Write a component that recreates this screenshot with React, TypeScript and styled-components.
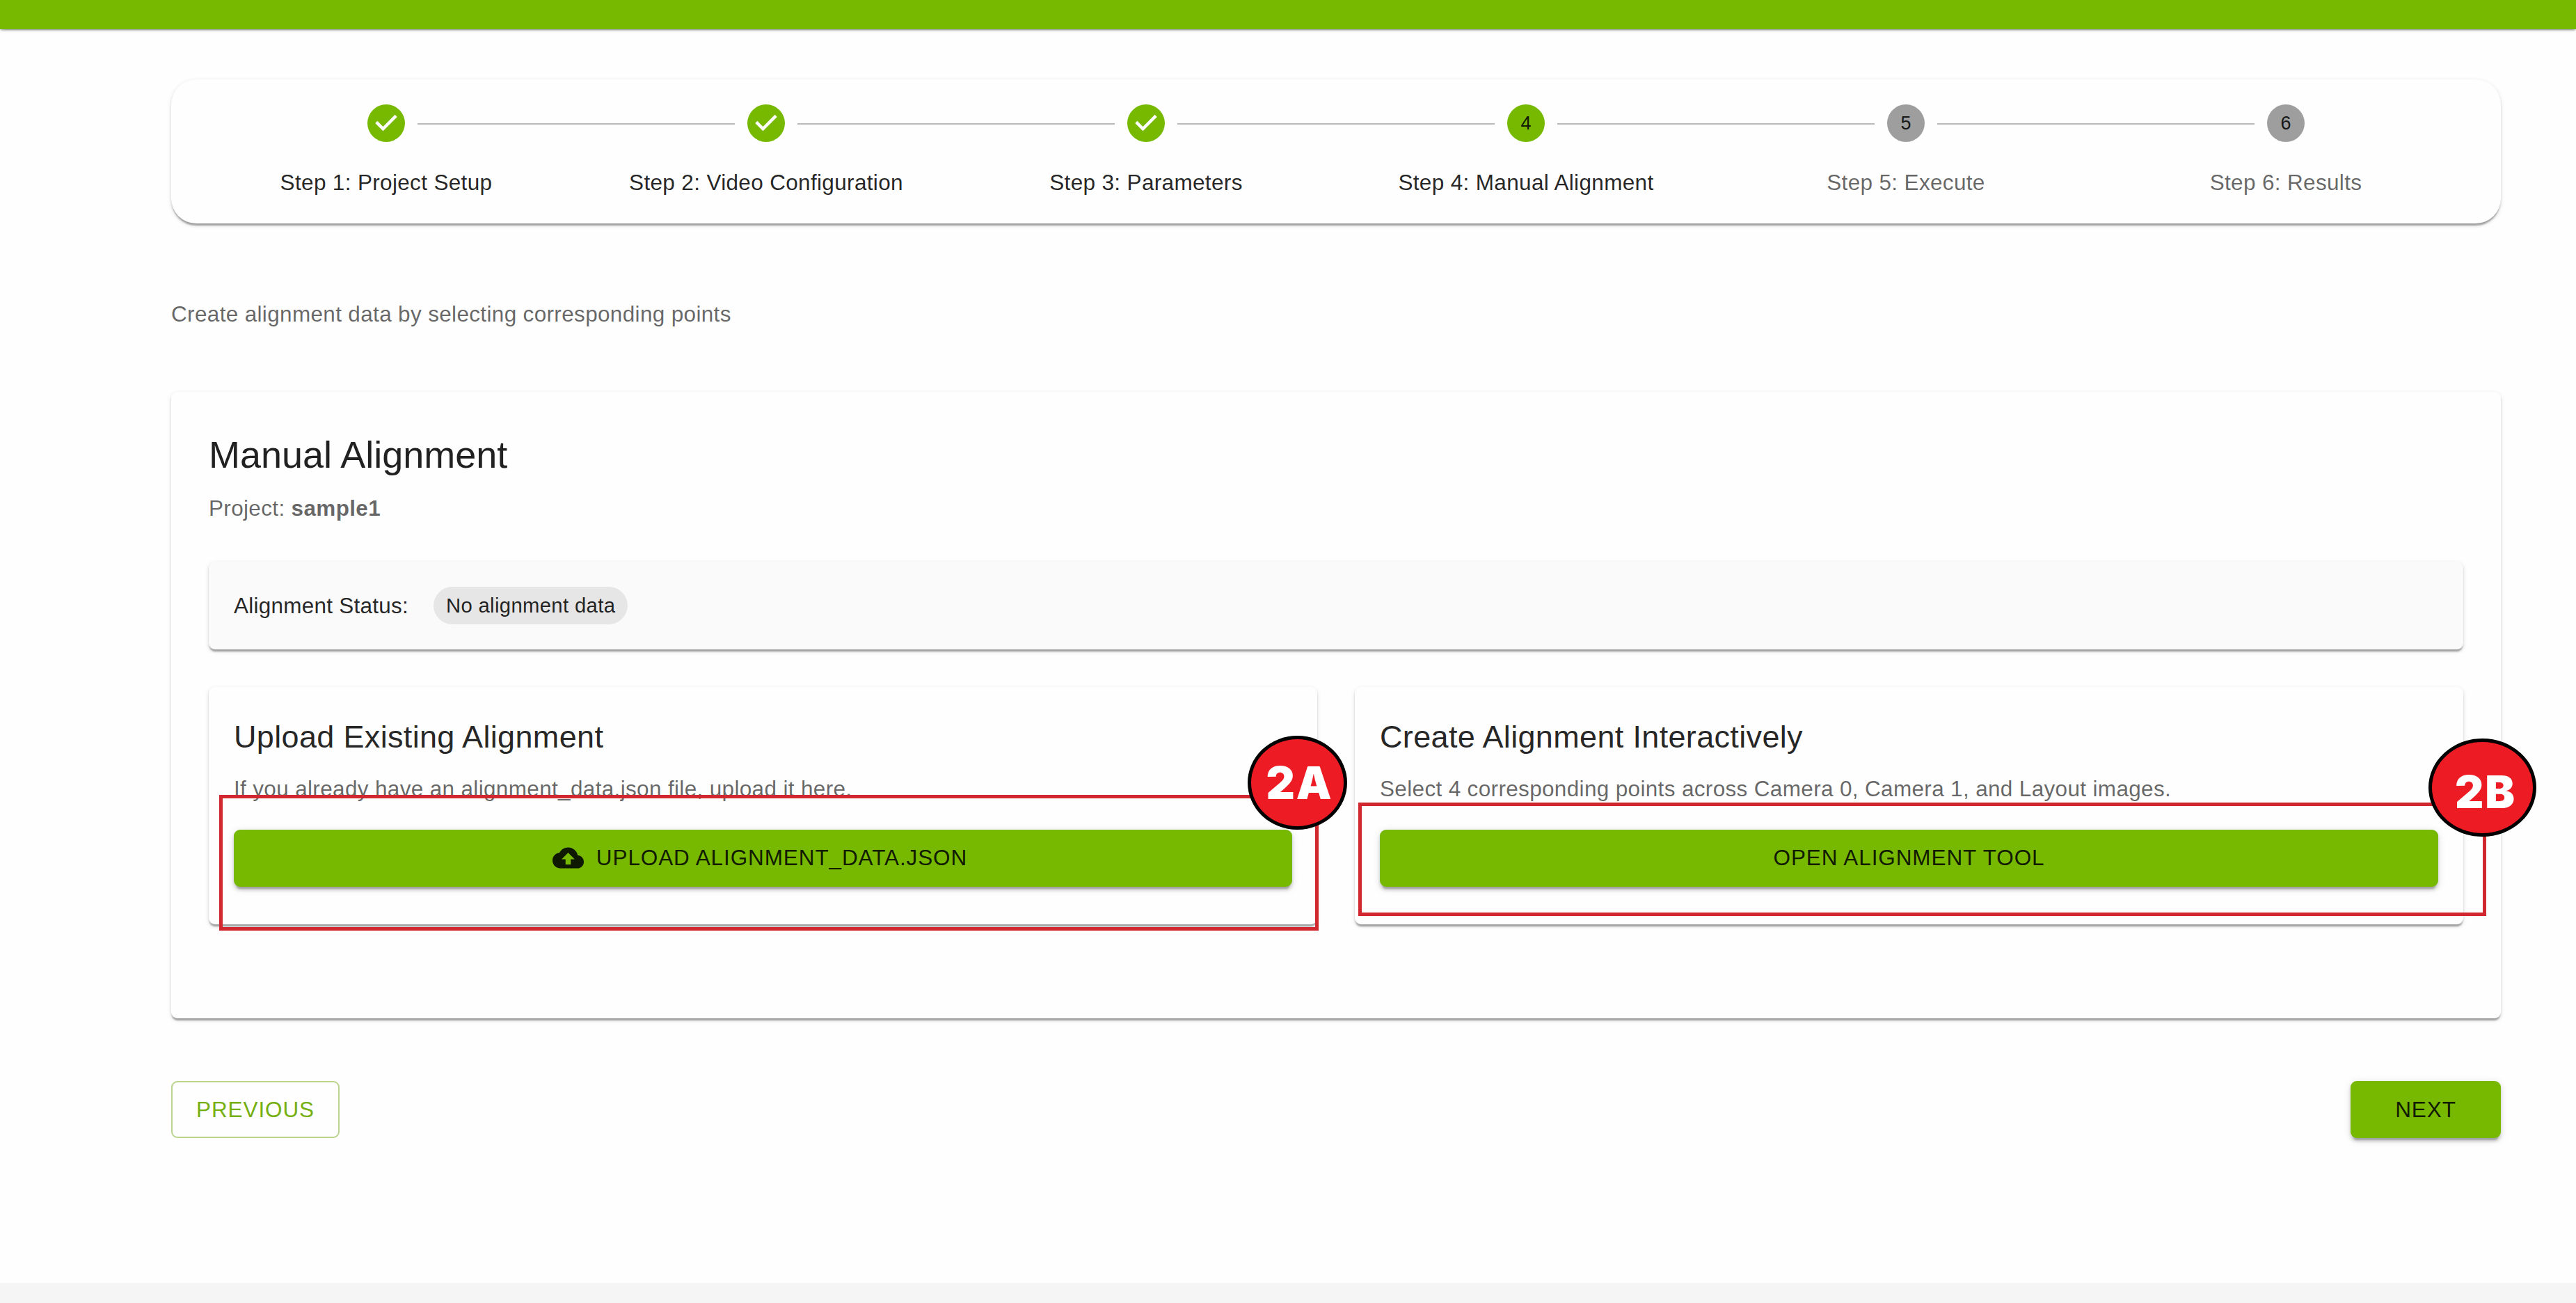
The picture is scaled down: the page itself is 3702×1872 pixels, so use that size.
import React from 'react';
import styled, { createGlobalStyle, css } from 'styled-components';

const green = '#76b900';
const surface = '#fefefe';
const textPrimary = 'rgba(0, 0, 0, 0.87)';
const textSecondary = 'rgba(0, 0, 0, 0.6)';

const raised1 = css`
  box-shadow:
    0 4.5px 2.25px -2.25px rgba(0, 0, 0, 0.2),
    0 2.25px 2.25px 0 rgba(0, 0, 0, 0.14),
    0 2.25px 6.75px 0 rgba(0, 0, 0, 0.12);
`;

const raised2 = css`
  box-shadow:
    0 6.75px 2.25px -4.5px rgba(0, 0, 0, 0.2),
    0 4.5px 4.5px 0 rgba(0, 0, 0, 0.14),
    0 2.25px 11.25px 0 rgba(0, 0, 0, 0.12);
`;

const body2 = css`
  font-size: 31.5px;
  line-height: 45px;
  letter-spacing: 0.01071em;
`;

const GlobalStyle = createGlobalStyle`
  *, *::before, *::after { box-sizing: border-box; }
  body {
    margin: 0;
    background: #f5f5f5;
    color: ${textPrimary};
    font-family: "Liberation Sans", Arial, Helvetica, sans-serif;
  }
  h1, h2, p { margin: 0; font-weight: 400; }
`;

const Page = styled.div`
  position: relative;
  display: flex;
  flex-direction: column;
  height: 1872px;
  overflow: hidden;
`;

const AppBar = styled.header`
  flex: none;
  height: 42px;
  background: ${green};
  z-index: 1;
  ${raised1}
`;

const Main = styled.main`
  flex: none;
  height: 1801px;
  padding: 72px 108px 0 246px;
  background: ${surface};
`;

const Stepper = styled.ol`
  display: grid;
  grid-template-columns: repeat(6, 1fr);
  margin: 0;
  padding: 36px;
  list-style: none;
  border-radius: 36px;
  background: ${surface};
  ${raised1}
`;

const StepItem = styled.li`
  display: flex;
  flex-direction: column;
  gap: 36px;
`;

const StepTrack = styled.div`
  display: flex;
  gap: 18px;
  height: 54px;
`;

const Connector = styled.span<{ $hidden: boolean }>`
  flex: 1;
  height: 2px;
  margin-top: 27px;
  background: ${(p) => (p.$hidden ? 'transparent' : '#bababa')};
`;

const StepBubble = styled.span<{ $active: boolean }>`
  display: flex;
  align-items: center;
  justify-content: center;
  width: 54px;
  height: 54px;
  border-radius: 50%;
  background: ${(p) => (p.$active ? green : '#9e9e9e')};
  font-size: 27px;
  line-height: 54px;
`;

const StepCheck = styled.svg`
  width: 54px;
  height: 54px;
  fill: ${green};
`;

const StepLabel = styled.span<{ $reached: boolean }>`
  ${body2}
  text-align: center;
  color: ${(p) => (p.$reached ? textPrimary : textSecondary)};
`;

const Description = styled.p`
  ${body2}
  margin-top: 108px;
  color: ${textSecondary};
`;

const Panel = styled.section`
  height: 900px;
  margin-top: 89px;
  padding: 54px;
  border-radius: 9px;
  background: ${surface};
  ${raised1}
`;

const PanelTitle = styled.h1`
  font-size: 54px;
  line-height: 72px;
  margin-bottom: 19px;
`;

const SecondaryText = styled.p`
  ${body2}
  color: ${textSecondary};
`;

const StatusBar = styled.div`
  display: flex;
  align-items: center;
  gap: 36px;
  height: 126px;
  margin: 54px 0;
  padding: 0 36px;
  border-radius: 9px;
  background: #fafafa;
  ${raised1}
`;

const StatusLabel = styled.span`
  ${body2}
  letter-spacing: 0.0075em;
`;

const Chip = styled.span`
  height: 54px;
  padding: 0 18px;
  border-radius: 36px;
  background: rgba(0, 0, 0, 0.08);
  font-size: 29.25px;
  line-height: 54px;
  letter-spacing: 0.012em;
`;

const Options = styled.div`
  display: grid;
  grid-template-columns: 1fr 1fr;
  gap: 54px;
`;

const Option = styled.article`
  display: flex;
  flex-direction: column;
  padding: 36px 36px 54px;
  border-radius: 9px;
  background: ${surface};
  ${raised1}
`;

const OptionTitle = styled.h2`
  font-size: 45px;
  line-height: 72px;
  letter-spacing: 0.0075em;
  margin-bottom: 15.75px;
`;

const Button = styled.button<{ $outlined?: boolean }>`
  display: flex;
  align-items: center;
  justify-content: center;
  gap: 18px;
  min-width: 216px;
  height: 82px;
  padding: 0 34px;
  border: ${(p) => (p.$outlined ? '2px solid rgba(118, 170, 30, 0.5)' : '0')};
  border-radius: 9px;
  background: ${(p) => (p.$outlined ? 'transparent' : green)};
  color: ${(p) => (p.$outlined ? '#76b010' : textPrimary)};
  font-family: inherit;
  font-size: 31.5px;
  line-height: 55px;
  letter-spacing: 0.02857em;
  text-transform: uppercase;
  ${(p) => !p.$outlined && raised2}
`;

const OptionButton = styled(Button)`
  margin-top: 36px;
`;

const CloudIcon = styled.svg`
  width: 45px;
  height: 45px;
  margin-left: -9px;
  fill: currentColor;
`;

const Navigation = styled.nav`
  display: flex;
  justify-content: space-between;
  margin-top: 90px;
`;

/* Annotations drawn over the page */
interface Area {
  $x: number;
  $y: number;
  $w: number;
  $h: number;
}

const Highlight = styled.div<Area>`
  position: absolute;
  z-index: 2;
  left: ${(p) => p.$x}px;
  top: ${(p) => p.$y}px;
  width: ${(p) => p.$w}px;
  height: ${(p) => p.$h}px;
  border: 5px solid #d0282e;
  pointer-events: none;
`;

const Marker = styled.div<Area & { $shiftX: number; $shiftY: number }>`
  position: absolute;
  z-index: 3;
  left: ${(p) => p.$x}px;
  top: ${(p) => p.$y}px;
  width: ${(p) => p.$w}px;
  height: ${(p) => p.$h}px;
  display: flex;
  align-items: center;
  justify-content: center;
  padding: ${(p) => p.$shiftY}px 0 0 ${(p) => p.$shiftX}px;
  border: 5px solid #000;
  border-radius: 50%;
  background: #ed1c24;
  color: #fff;
  font-family: Inter, "Liberation Sans", sans-serif;
  font-size: 64px;
  font-weight: 900;
  letter-spacing: 2px;
  line-height: 1;
`;

const steps = ['Project Setup', 'Video Configuration', 'Parameters', 'Manual Alignment', 'Execute', 'Results'];
const current = 4;

function Step({ index, label }: { index: number; label: string }) {
  return (
    <StepItem>
      <StepTrack>
        <Connector $hidden={index === 1} />
        {index < current ? (
          <StepCheck viewBox="0 0 24 24">
            <path d="M12 0a12 12 0 1 0 0 24 12 12 0 0 0 0-24zm-2 17l-5-5 1.4-1.4 3.6 3.6 7.6-7.6L19 8l-9 9z" />
          </StepCheck>
        ) : (
          <StepBubble $active={index === current}>{index}</StepBubble>
        )}
        <Connector $hidden={index === steps.length} />
      </StepTrack>
      <StepLabel $reached={index <= current}>
        Step {index}: {label}
      </StepLabel>
    </StepItem>
  );
}

export default function App() {
  return (
    <Page>
      <GlobalStyle />
      <AppBar />
      <Main>
        <Stepper>
          {steps.map((label, i) => (
            <Step key={label} index={i + 1} label={label} />
          ))}
        </Stepper>
        <Description>Create alignment data by selecting corresponding points</Description>
        <Panel>
          <PanelTitle>Manual Alignment</PanelTitle>
          <SecondaryText>
            Project: <strong>sample1</strong>
          </SecondaryText>
          <StatusBar>
            <StatusLabel>Alignment Status:</StatusLabel>
            <Chip>No alignment data</Chip>
          </StatusBar>
          <Options>
            <Option>
              <OptionTitle>Upload Existing Alignment</OptionTitle>
              <SecondaryText>If you already have an alignment_data.json file, upload it here.</SecondaryText>
              <OptionButton>
                <CloudIcon viewBox="0 0 24 24">
                  <path d="M19.35 10.04C18.67 6.59 15.64 4 12 4 9.11 4 6.6 5.64 5.35 8.04 2.34 8.36 0 10.91 0 14c0 3.31 2.69 6 6 6h13c2.76 0 5-2.24 5-5 0-2.64-2.05-4.78-4.65-4.96zM14 13v4h-4v-4H7l5-5 5 5h-3z" />
                </CloudIcon>
                Upload alignment_data.json
              </OptionButton>
            </Option>
            <Option>
              <OptionTitle>Create Alignment Interactively</OptionTitle>
              <SecondaryText>
                Select 4 corresponding points across Camera 0, Camera 1, and Layout images.
              </SecondaryText>
              <OptionButton>Open Alignment Tool</OptionButton>
            </Option>
          </Options>
        </Panel>
        <Navigation>
          <Button $outlined>Previous</Button>
          <Button>Next</Button>
        </Navigation>
      </Main>
      <Highlight $x={315} $y={1142} $w={1580} $h={195} />
      <Highlight $x={1952} $y={1153} $w={1621} $h={163} />
      <Marker $x={1793} $y={1057} $w={143} $h={135} $shiftX={6} $shiftY={0}>2A</Marker>
      <Marker $x={3490} $y={1061} $w={155} $h={141} $shiftX={9} $shiftY={13}>2B</Marker>
    </Page>
  );
}
